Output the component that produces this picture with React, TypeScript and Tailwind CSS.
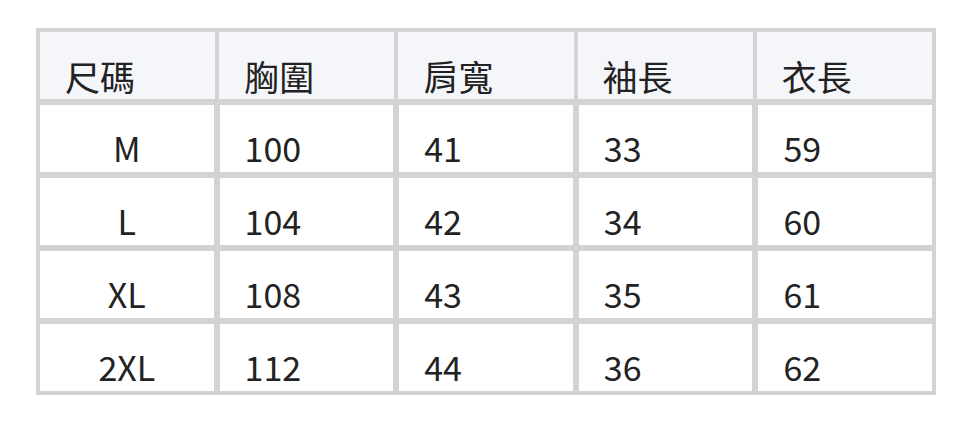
const HEAD = ["尺碼", "胸圍", "肩寬", "袖長", "衣長"];

const ROWS = [
  ["M", "100", "41", "33", "59"],
  ["L", "104", "42", "34", "60"],
  ["XL", "108", "43", "35", "61"],
  ["2XL", "112", "44", "36", "62"],
];

export default function App() {
  return (
    <div
      className="w-[972px] h-[422px] bg-white pt-[28px] pl-[36px] text-[#222222]"
      style={{ fontFamily: '"Noto Sans CJK TC", "Noto Sans", sans-serif' }}
    >
      <div className="w-[900px] bg-[#d3d3d3] p-[4px] flex flex-col gap-[6px]">
        <div className="grid grid-cols-5 gap-[4px]">
          {HEAD.map((h) => (
            <div key={h} className="h-[67px] bg-[#f5f6fa] flex items-end pl-[25px] pb-[3px] text-[35px] leading-[40px]">
              {h}
            </div>
          ))}
        </div>
        {ROWS.map((r) => (
          <div key={r[0]} className="grid grid-cols-5 gap-[6px]">
            {r.map((c, i) => (
              <div
                key={i}
                className={`h-[67px] bg-white flex items-end pb-[4px] text-[34px] leading-[40px] ${
                  i === 0 ? "justify-center" : "pl-[25px]"
                }`}
              >
                {c}
              </div>
            ))}
          </div>
        ))}
      </div>
    </div>
  );
}
